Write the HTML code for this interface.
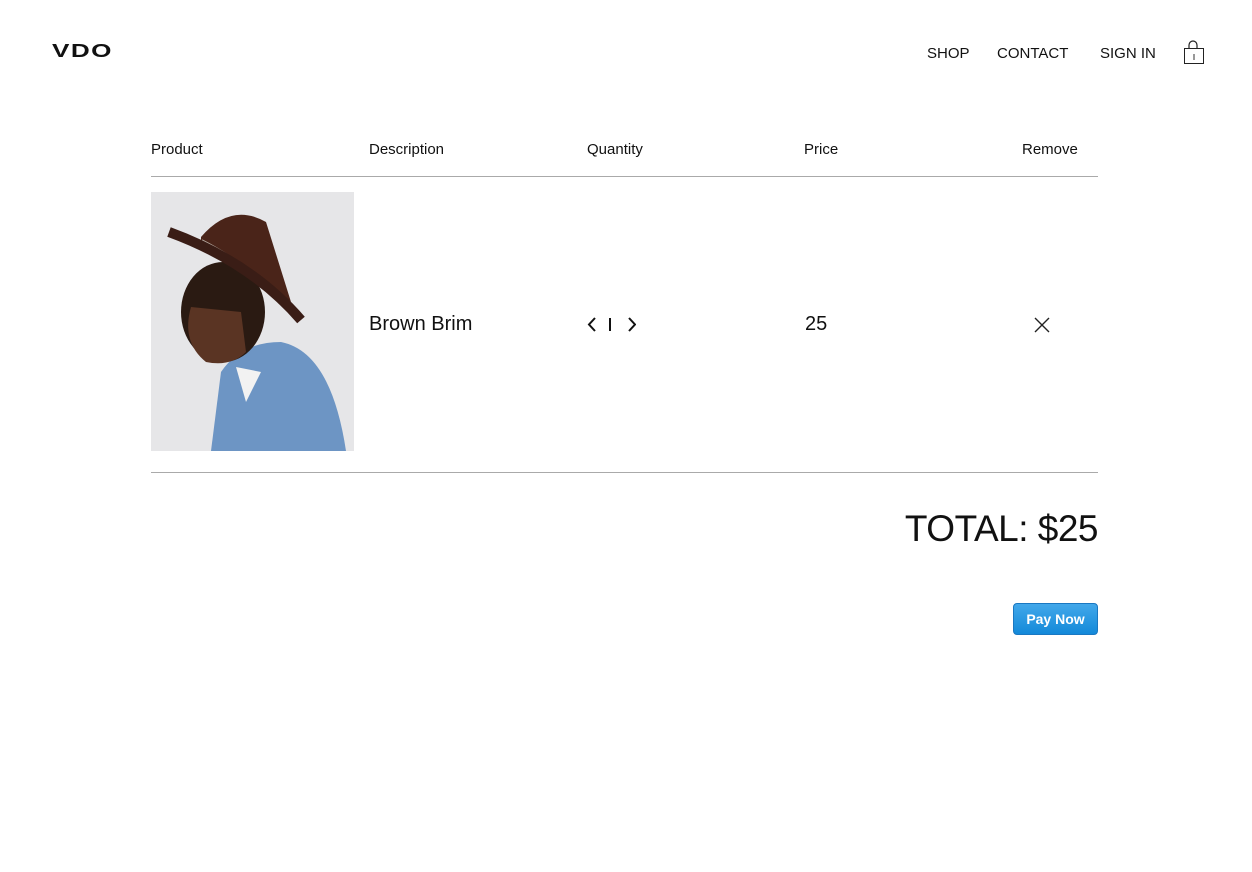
<!DOCTYPE html>
<html><head><style>
body{margin:0;width:1252px;height:872px;background:#fff;font-family:"Liberation Sans",sans-serif;color:#111;position:relative;overflow:hidden}
.a{position:absolute;white-space:nowrap}
.logo{left:52px;top:41px;font-weight:900;font-size:18px;letter-spacing:1px;transform:scaleX(1.45);transform-origin:left}
.nav{top:45px;font-size:15px}
.h{top:141px;font-size:15px}
.line{position:absolute;left:151px;width:947px;height:1px;background:#aaa}
</style></head><body>
<div class="a logo">VDO</div>
<div class="a nav" style="left:927px">SHOP</div>
<div class="a nav" style="left:997px">CONTACT</div>
<div class="a nav" style="left:1100px">SIGN IN</div>
<svg class="a" style="left:1183px;top:40px" width="22" height="25"><path d="M6 8V5a4 4 0 0 1 8 0v3" fill="none" stroke="#222" stroke-width="1.2"/><rect x="1.5" y="8.5" width="19" height="15" fill="none" stroke="#222"/><line x1="11" y1="14" x2="11" y2="20" stroke="#333"/></svg>
<div class="a h" style="left:151px">Product</div>
<div class="a h" style="left:369px">Description</div>
<div class="a h" style="left:587px">Quantity</div>
<div class="a h" style="left:804px">Price</div>
<div class="a h" style="left:1022px">Remove</div>
<div class="line" style="top:176px"></div>
<svg class="a" style="left:151px;top:192px" width="203" height="259">
<rect width="203" height="259" fill="#e6e6e8"/>
<path d="M60 259 L70 180 Q90 150 130 150 Q180 160 195 259Z" fill="#6d95c4"/>
<path d="M85 175 L95 210 L110 180Z" fill="#f2f2f2"/>
<ellipse cx="72" cy="120" rx="42" ry="50" fill="#2a1a12"/>
<path d="M40 115 Q30 150 55 170 Q80 175 95 160 L90 120Z" fill="#5a3423"/>
<path d="M50 45 Q80 10 115 30 L140 110 Q90 70 50 55Z" fill="#4a2419"/>
<path d="M50 50 Q90 70 130 110" stroke="#b5a9a0" stroke-width="6" fill="none"/>
<path d="M18 40 Q100 70 150 128" stroke="#3a1d16" stroke-width="10" fill="none"/>
</svg>
<div class="a" style="left:369px;top:313px;font-size:20px">Brown Brim</div>
<svg class="a" style="left:586px;top:315px" width="50" height="20"><path d="M9 3L3 9.5L9 16M43 3L49 9.5L43 16" fill="none" stroke="#111" stroke-width="2"/><line x1="24" y1="3" x2="24" y2="16" stroke="#111" stroke-width="2"/></svg>
<div class="a" style="left:805px;top:313px;font-size:20px">25</div>
<svg class="a" style="left:1034px;top:317px" width="16" height="16"><path d="M1 1L15 15M15 1L1 15" stroke="#222" stroke-width="1.4"/></svg>
<div class="line" style="top:472px"></div>
<div class="a" style="right:154px;top:508px;font-size:37px;letter-spacing:-0.5px">TOTAL: $25</div>
<div class="a" style="left:1013px;top:603px;width:83px;height:30px;border:1px solid #1a78c2;border-radius:4px;background:linear-gradient(#42a8ea,#1389d9);color:#fff;font-weight:bold;font-size:14px;text-align:center;line-height:30px">Pay Now</div>
</body></html>
